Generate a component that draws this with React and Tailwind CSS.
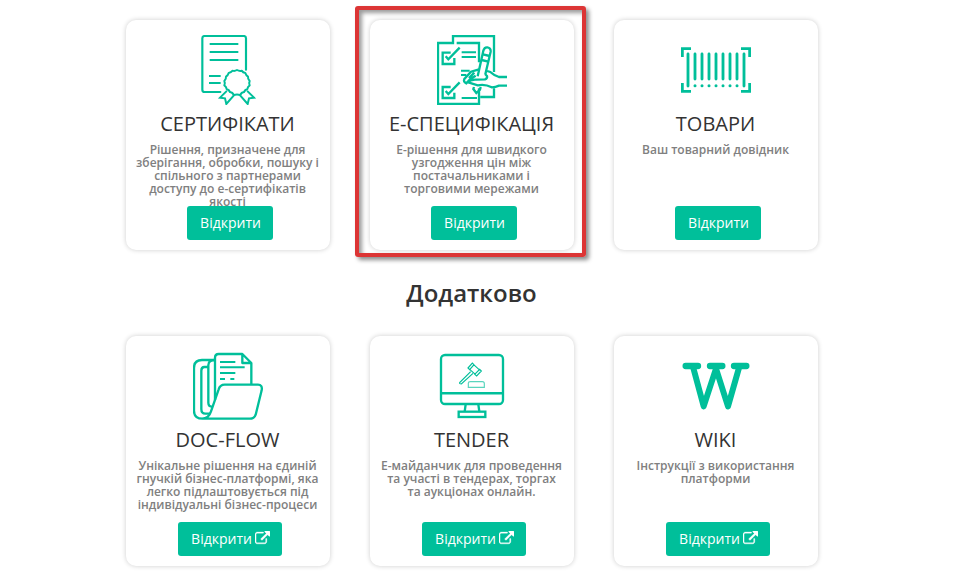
import React from "react";

const line = { fill: "none", stroke: "#00bf9a", strokeWidth: 7 };

function CertificateIcon() {
  return (
    <svg viewBox="24 30 210 210" className="block h-[70px] w-[70px]" {...line} strokeWidth="6.5" strokeLinecap="round" strokeLinejoin="round">
      <path d="M106 201H59a7 7 0 0 1-7-7V40a7 7 0 0 1 7-7H176a7 7 0 0 1 7 7V134" />
      <path d="M74 57H160M74 81H160M74 105H160M72 153H107M72 174H107" strokeLinecap="butt" />
      <path d="M143 137Q149 139 156 135Q163 139 170 137Q174 143 181 144Q183 151 189 155Q188 162 194 168Q191 174 194 181Q188 185 187 192Q180 194 177 201Q169 202 166 210Q156 207 146 210Q143 202 135 201Q132 194 125 192Q124 185 118 181Q121 174 118 168Q124 162 123 155Q129 151 131 144Q138 143 143 137Z" strokeWidth="6" />
      <path d="M124 199L105 218L120 220L124 237L146 212M188 199L207 218L192 220L188 237L166 212" strokeWidth="6" strokeLinejoin="miter" />
    </svg>
  );
}

function SpecificationIcon() {
  return (
    <svg viewBox="36 30 210 210" className="block h-[70px] w-[70px]" {...line}>
      <path d="M95 54H162V112M162 190V237H39V54H84V33H207V141M207 190V216H166" />
      <path d="M77 83H53V117H88V99M77 186H53V219H88V203" />
      <path d="M62 94L70 103L104 68M62 198L70 207L104 172" />
      <path d="M110 82H153M110 96H153M108 137H134M108 150H124M110 219H156" strokeWidth="6" />
      <path d="M158 154L175 77Q178 66 187 67Q198 69 197 80L181 148M174 88L194 93M170 105L190 110M147 186L145 192L154 204L165 194L167 186" />
      <path d="M246 156H222Q205 150 196 141L186 138M162 133L138 140L118 162Q114 171 124 175L136 162L152 152M130 172L158 181Q180 176 200 187Q212 187 222 182H246M124 174Q140 162 154 164L180 163Q188 160 186 153L180 147M148 143L132 159" />
    </svg>
  );
}

function BarcodeIcon() {
  return (
    <svg viewBox="33 0 210 210" className="block h-[70px] w-[70px]" {...line} strokeWidth="8.5">
      <path d="M37 66V41H63M213 41H239V66M239 144V169H213M63 169H37V144" />
      <path d="M54 57V153M75 57V132M96 57V132M117 57V132M138 57V132M159 57V132M180 57V132M201 57V132M222 57V153" strokeLinecap="round" />
      <path d="M75 152h.1M96 152h.1M117 152h.1M138 152h.1M159 152h.1M180 152h.1M201 152h.1" strokeLinecap="round" strokeWidth="9" />
    </svg>
  );
}

function FoldersIcon() {
  return (
    <svg viewBox="39 33 210 210" className="block h-[70px] w-[70px]" {...line} strokeLinejoin="round">
      <path d="M104 60H66Q42 60 42 84V212Q42 236 68 236H210Q223 236 227 224L245 151Q248 134 234 134H134Q120 134 116 148L93 214Q86 236 66 236" />
      <path d="M84 81H73Q64 81 64 92V207Q64 221 76 221H89M104 60Q85 60 85 76V188Q85 200 98 200" />
      <path d="M105 180V53Q105 42 116 42H187L214 69V133M187 42V69H214" />
      <path d="M120 66H166M120 82H194M120 99H166M120 117H135M151 117H163" strokeWidth="6" />
    </svg>
  );
}

function AuctionIcon() {
  return (
    <svg viewBox="36 33 210 210" className="block h-[70px] w-[70px]" {...line}>
      <rect x="48" y="45" width="186" height="147" rx="12" />
      <path d="M48 160H234" strokeWidth="7.5" />
      <path d="M122 193L119 215M160 193L163 215" />
      <rect x="101" y="215" width="80" height="16" />
      <g strokeWidth="3.5">
        <path d="M129 84L142 69L147 74L134 89ZM149 103L164 88L169 93L155 108ZM146 74L165 91M134 88L152 104" />
        <path d="M137 95L104 128Q103 132 109 132L144 100" />
        <path d="M130 142V129Q130 125 136 125H172Q178 125 178 131V142Z" strokeOpacity=".65" />
      </g>
    </svg>
  );
}

function WikiIcon() {
  return (
    <svg viewBox="33 33 210 210" className="block h-[70px] w-[70px]" {...line} strokeWidth="19" strokeLinecap="round" strokeLinejoin="round">
      <path d="M47 78H84M120 78H157M192 78H229" />
      <path d="M69 80L101 199L138 86L174 199L208 80" strokeWidth="18" />
    </svg>
  );
}

function ExternalIcon() {
  return (
    <svg viewBox="0 0 1792 1792" className="-mt-px ml-[3px] h-[15px] w-[15px] fill-current stroke-current" strokeWidth="40">
      <path d="M1408 928v320q0 119-84.500 203.500t-203.500 84.500h-832q-119 0-203.500-84.500t-84.500-203.500v-832q0-119 84.500-203.500t203.500-84.500h704q14 0 23 9t9 23v64q0 14-9 23t-23 9h-704q-66 0-113 47t-47 113v832q0 66 47 113t113 47h832q66 0 113-47t47-113v-320q0-14 9-23t23-9h64q14 0 23 9t9 23zm384-864v512q0 26-19 45t-45 19-45-19l-176-176-652 652q-10 10-23 10t-23-10l-114-114q-10-10-10-23t10-23l652-652-176-176q-19-19-19-45t19-45 45-19h512q26 0 45 19t19 45z" />
    </svg>
  );
}

const services = [
  { title: "СЕРТИФІКАТИ", Icon: CertificateIcon, text: "Рішення, призначене для\nзберігання, обробки, пошуку і\nспільного з партнерами\nдоступу до е-сертифікатів\nякості" },
  { title: "Е-СПЕЦИФІКАЦІЯ", Icon: SpecificationIcon, highlighted: true, text: "Е-рішення для швидкого\nузгодження цін між\nпостачальниками і\nторговими мережами" },
  { title: "ТОВАРИ", Icon: BarcodeIcon, text: "Ваш товарний довідник" },
];

const extras = [
  { title: "DOC-FLOW", Icon: FoldersIcon, external: true, text: "Унікальне рішення на єдиній\nгнучкій бізнес-платформі, яка\nлегко підлаштовується під\nіндивідуальні бізнес-процеси" },
  { title: "TENDER", Icon: AuctionIcon, external: true, text: "Е-майданчик для проведення\nта участі в тендерах, торгах\nта аукціонах онлайн." },
  { title: "WIKI", Icon: WikiIcon, external: true, text: "Інструкції з використання\nплатформи" },
];

function Card({ title, text, Icon, external, highlighted }) {
  return (
    <article className="relative flex h-[230px] w-[204px] flex-col items-center rounded-[10px] bg-white pt-[15px] shadow-[0_0_5px_rgba(0,0,0,0.2)]">
      <Icon />
      <h3 className="mr-px mt-[7px] h-6 whitespace-nowrap text-[20px] leading-6 text-[#333]">{title}</h3>
      <p className="mr-px mt-[7px] h-[63px] whitespace-pre text-center text-[12px] font-semibold leading-[13px] text-[#808080]">{text}</p>
      <button className={`relative ml-1 flex h-[34px] shrink-0 items-center justify-center rounded-[3px] bg-[#00bf9a] pl-px text-[14px] text-white ${external ? "w-[104px]" : "w-[86px]"}`}>
        <span className="pb-0.5">Відкрити</span>
        {external && <ExternalIcon />}
      </button>
      {highlighted && (
        <div className="pointer-events-none absolute -left-[15px] -top-[14px] h-[251px] w-[231px] rounded-[3px] border-4 border-[#dc3535] shadow-[3px_3px_4px_rgba(0,0,0,0.45),inset_3px_3px_4px_rgba(0,0,0,0.4)]" />
      )}
    </article>
  );
}

export default function App() {
  return (
    <main className="h-[587px] w-[956px] overflow-hidden bg-white pl-[126px] pt-5 font-['Open_Sans','Noto_Sans',sans-serif]">
      <section className="flex gap-10">
        {services.map((s) => <Card key={s.title} {...s} />)}
      </section>
      <h2 className="flex h-[86px] w-[691px] items-center justify-center text-[24px] font-semibold text-[#333]">Додатково</h2>
      <section className="flex gap-10">
        {extras.map((s) => <Card key={s.title} {...s} />)}
      </section>
    </main>
  );
}
